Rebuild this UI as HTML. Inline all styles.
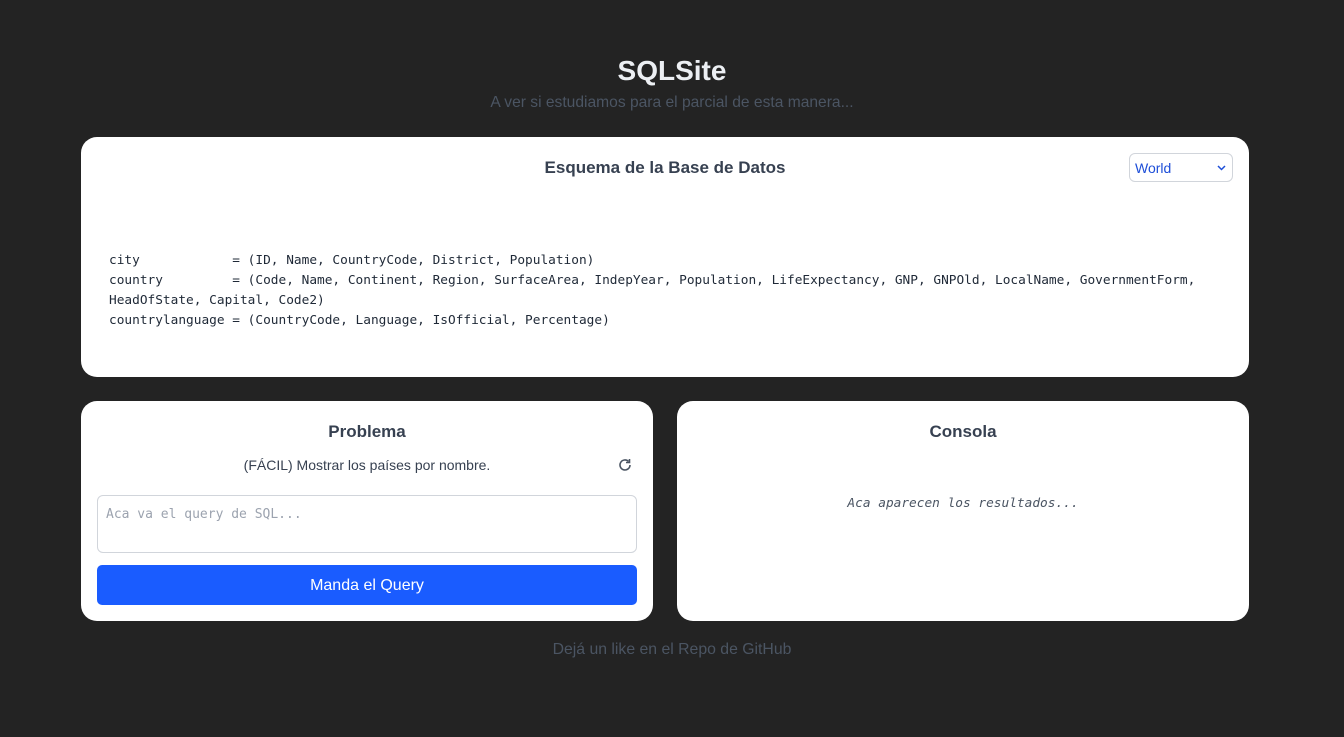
<!DOCTYPE html>
<html><head><meta charset="utf-8"><style>
*{box-sizing:border-box;margin:0;padding:0}
body{width:1344px;height:737px;background:#232323;font-family:"Liberation Sans",Arial,sans-serif;overflow:hidden;position:relative}
h1{position:absolute;top:55px;width:100%;text-align:center;color:#eceff3;font-size:28px;font-weight:bold}
.sub{position:absolute;top:94px;width:100%;text-align:center;color:#4b5563;font-size:15.6px}
.card{position:absolute;background:#fff;border-radius:16px}
.t{position:absolute;width:100%;text-align:center;color:#374151;font-size:17px;font-weight:bold}
pre{position:absolute;left:28px;top:114px;font-family:"DejaVu Sans Mono","Liberation Mono",monospace;font-size:12.8px;line-height:20px;color:#1f2937}
.sel{position:absolute;left:1048px;top:16px;width:104px;height:29px;border:1px solid #d1d5db;border-radius:6px;color:#1d4ed8;font-size:14px;padding:6px 0 0 5px}
.foot{position:absolute;top:641px;width:100%;text-align:center;color:#4b5563;font-size:15.8px}
</style></head><body>
<h1>SQLSite</h1>
<div class="sub">A ver si estudiamos para el parcial de esta manera...</div>
<div class="card" style="left:81px;top:137px;width:1168px;height:240px">
<div class="t" style="top:21px">Esquema de la Base de Datos</div>
<div class="sel">World<svg style="position:absolute;right:6px;top:11px" width="9" height="6" viewBox="0 0 9 6"><path d="M1 1l3.5 3.5L8 1" stroke="#1d4ed8" stroke-width="1.5" fill="none"/></svg></div>
<pre>city            = (ID, Name, CountryCode, District, Population)
country         = (Code, Name, Continent, Region, SurfaceArea, IndepYear, Population, LifeExpectancy, GNP, GNPOld, LocalName, GovernmentForm,
HeadOfState, Capital, Code2)
countrylanguage = (CountryCode, Language, IsOfficial, Percentage)</pre>
</div>
<div class="card" style="left:81px;top:401px;width:572px;height:220px">
<div class="t" style="top:21px">Problema</div>
<div style="position:absolute;top:56px;width:100%;text-align:center;font-size:14px;color:#374151">(FÁCIL) Mostrar los países por nombre.</div>
<svg style="position:absolute;left:536px;top:56px" width="16" height="16" viewBox="0 0 16 16"><path d="M13 8a5 5 0 1 1-1.5-3.6" stroke="#4b5563" stroke-width="1.6" fill="none"/><path d="M12.5 2v3.5H9" stroke="#4b5563" stroke-width="1.6" fill="none"/></svg>
<div style="position:absolute;left:16px;top:94px;width:540px;height:58px;border:1px solid #d1d5db;border-radius:6px;padding:11px 8px;font-family:'DejaVu Sans Mono',monospace;font-size:13px;color:#9ca3af">Aca va el query de SQL...</div>
<div style="position:absolute;left:16px;top:164px;width:540px;height:40px;background:#1a5cff;border-radius:5px;color:#fff;font-size:16px;text-align:center;line-height:41px">Manda el Query</div>
</div>
<div class="card" style="left:677px;top:401px;width:572px;height:220px">
<div class="t" style="top:21px">Consola</div>
<div style="position:absolute;top:95px;width:100%;text-align:center;font-family:'DejaVu Sans Mono',monospace;font-style:italic;font-size:12.8px;color:#4b5563">Aca aparecen los resultados...</div>
</div>
<div class="foot">Dejá un like en el Repo de GitHub</div>
</body></html>
